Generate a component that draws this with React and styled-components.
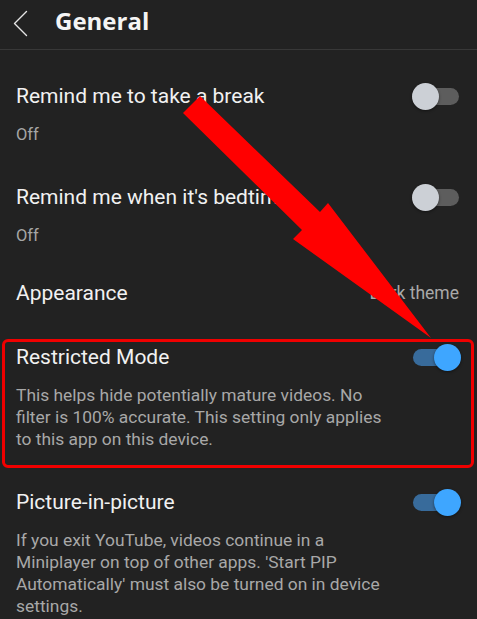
import React from "react";
import styled, { createGlobalStyle } from "styled-components";

const GlobalStyle = createGlobalStyle`
  body {
    margin: 0;
    background: #222222;
    font-family: Roboto, "Liberation Sans", sans-serif;
  }
`;

// settings list data
const rows = [
  { title: "Remind me to take a break", sub: "Off", toggle: "off" },
  { title: "Remind me when it's bedtime", sub: "Off", toggle: "off" },
  { title: "Appearance", value: "Dark theme" },
  {
    title: "Restricted Mode",
    desc: "This helps hide potentially mature videos. No filter is 100% accurate. This setting only applies to this app on this device.",
    toggle: "on",
    highlight: true,
  },
  {
    title: "Picture-in-picture",
    desc: "If you exit YouTube, videos continue in a Miniplayer on top of other apps. 'Start PIP Automatically' must also be turned on in device settings.",
    toggle: "on",
  },
];

const App = () => {
  return (
    <>
      <GlobalStyle />
      <Page>
        <Header>
          <BackButton>
            <svg width="16" height="28" viewBox="0 0 16 28" fill="none">
              <path d="M13.5 1.5 L1.5 13.5 L13.5 25.5" stroke="#e6e6e6" strokeWidth="1.4" strokeLinecap="round" strokeLinejoin="round" />
            </svg>
          </BackButton>
          <HeaderTitle>General</HeaderTitle>
        </Header>
        <List>
          {rows.map((row) => (
            <Row key={row.title} $highlight={row.highlight} $short={!!row.value}>
              <RowHead>
                <Title>{row.title}</Title>
                {row.toggle && <Toggle $on={row.toggle === "on"} />}
                {row.value && <Value>{row.value}</Value>}
              </RowHead>
              {row.sub && <Sub>{row.sub}</Sub>}
              {row.desc && <Desc>{row.desc}</Desc>}
            </Row>
          ))}
        </List>
        {/* big red pointer */}
        <Arrow viewBox="0 0 477 619">
          <polygon
            points="183,113 200,96 320,212 328,203 431,338 293,239 302,230"
            fill="#ff0000"
          />
        </Arrow>
      </Page>
    </>
  );
};

const Page = styled.div`
  position: relative;
  width: 477px;
  height: 619px;
  overflow: hidden;
  background: #222222;
  color: #f1f1f1;
`;

const Header = styled.div`
  height: 49px;
  display: flex;
  align-items: center;
  border-bottom: 1px solid #383838;
  padding-left: 13px;
`;

const BackButton = styled.div`
  width: 42px;
  height: 28px;
  display: flex;
  align-items: center;
  margin-top: -2px;
`;

const HeaderTitle = styled.h1`
  margin: 0;
  font-family: "Open Sans", sans-serif;
  font-weight: 700;
  font-size: 24px;
  color: #f4f4f4;
  margin-top: -9px;
`;

const List = styled.div`
  padding-top: 12px;
`;

const Row = styled.div`
  position: relative;
  padding: ${(p) => (p.$short ? "16px 18px 17px 16px" : "21px 18px 18px 16px")};
  ${(p) =>
    p.$highlight &&
    `
    &::after {
      content: "";
      position: absolute;
      left: 2px;
      right: 3px;
      top: 16px;
      bottom: 0;
      border: 3px solid #f00000;
      border-radius: 6px;
      pointer-events: none;
    }
  `}
`;

const RowHead = styled.div`
  display: flex;
  align-items: center;
  justify-content: space-between;
  height: 26px;
`;

const Title = styled.div`
  font-size: 21px;
  line-height: 26px;
  color: #f1f1f1;
`;

const Value = styled.div`
  font-size: 17.5px;
  color: #a9a9a9;
`;

const Sub = styled.div`
  margin-top: 16px;
  font-size: 16.5px;
  line-height: 20px;
  color: #a6a6a6;
`;

const Desc = styled.div`
  margin-top: 15px;
  max-width: 376px;
  font-size: 17.4px;
  line-height: 21.8px;
  color: #a8a8a8;
`;

const Toggle = styled.div`
  position: relative;
  width: 46px;
  height: 17px;
  border-radius: 9px;
  background: ${(p) => (p.$on ? "#386b9b" : "#5d5d5d")};
  &::after {
    content: "";
    position: absolute;
    top: 50%;
    left: ${(p) => (p.$on ? "20.5px" : "-1.5px")};
    width: 27px;
    height: 27px;
    margin-top: -13.5px;
    border-radius: 50%;
    background: ${(p) => (p.$on ? "#3ea6ff" : "#ccd0d6")};
    box-shadow: 0 1px 3px rgba(0, 0, 0, 0.45);
  }
`;

const Arrow = styled.svg`
  position: absolute;
  left: 0;
  top: 0;
  width: 477px;
  height: 619px;
  pointer-events: none;
`;

export default App;
